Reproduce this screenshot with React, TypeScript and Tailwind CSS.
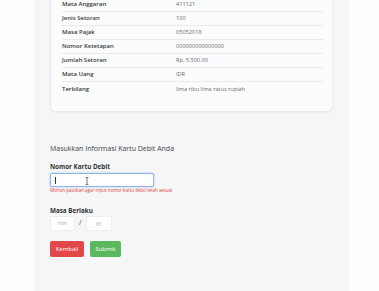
const rows = [
  { label: 'Mata Anggaran', value: '411121' },
  { label: 'Jenis Setoran', value: '100' },
  { label: 'Masa Pajak', value: '05052018' },
  { label: 'Nomor Ketetapan', value: '000000000000000' },
  { label: 'Jumlah Setoran', value: 'Rp. 5,500.00' },
  { label: 'Mata Uang', value: 'IDR' },
  { label: 'Terbilang', value: 'lima ribu lima ratus rupiah' },
];

export default function App() {
  return (
    <div
      className="h-[291px] overflow-hidden bg-[#fdfdfd] text-[#333]"
      style={{ fontFamily: '"Open Sans", "Noto Sans", sans-serif' }}
    >
      <div className="ml-[34px] w-[315px] h-[320px] bg-[#f5f6f7] px-[16px]">
        {/* ringkasan setoran */}
        <div className="-mt-[11px] pt-[8px] pb-[15px] pl-[11px] pr-[9px] rounded-md border border-[#e9ebee] bg-[#fbfcfd] shadow-[0_1px_2px_rgba(0,0,0,0.04)]">
          {rows.map((r, i) => (
            <div
              key={r.label}
              className={`flex items-center h-[14px] ${i < rows.length - 1 ? 'border-b border-[#e8eaec]' : ''}`}
            >
              <div className="w-[114px] text-[6px] font-semibold text-[#3a3a3a]">{r.label}</div>
              <div className="text-[5.6px] text-[#6b6b6b]">{r.value}</div>
            </div>
          ))}
        </div>

        {/* form kartu debit */}
        <div className="pt-[33px]">
          <h2 className="text-[7px] leading-none text-[#444] scale-y-110 origin-left">Masukkan Informasi Kartu Debit Anda</h2>

          <label className="block mt-[12px] text-[6.3px] font-bold text-[#333] leading-none">Nomor Kartu Debit</label>
          <div className="relative mt-[3px] w-[104px] h-[14px] rounded-[2px] border border-[#8fb6e6] bg-white shadow-[0_0_2px_rgba(80,140,220,0.5)]">
            <div className="absolute left-[4px] top-[3px] w-px h-[7px] bg-[#333]" />
            <svg className="absolute left-[34px] top-[3px]" width="4" height="8" viewBox="0 0 4 8">
              <path d="M0.5 0.5h3M2 0.5v7M0.5 7.5h3" stroke="#555" strokeWidth="0.8" fill="none" />
            </svg>
          </div>
          <p className="mt-[1px] text-[4.5px] leading-tight text-[#e0403a]">
            Mohon pastikan agar input nomor kartu debit telah sesuai
          </p>

          <label className="block mt-[14px] text-[6.3px] font-bold text-[#333] leading-none">Masa Berlaku</label>
          <div className="mt-[2px] flex items-center gap-[4px]">
            <div className="w-[25px] h-[15px] rounded-[2px] border border-[#eceef0] bg-white flex items-center justify-center text-[5px] text-[#aaa]">
              mm
            </div>
            <span className="text-[7px] text-[#444]">/</span>
            <div className="w-[26px] h-[15px] rounded-[2px] border border-[#eceef0] bg-white flex items-center justify-center text-[5px] text-[#aaa]">
              yy
            </div>
          </div>

          <div className="mt-[10px] flex gap-[6px]">
            <button className="w-[34px] h-[16px] rounded-[2px] bg-[#e2474a] text-white text-[6px]">Kembali</button>
            <button className="w-[31px] h-[16px] rounded-[2px] bg-[#5cb85c] text-white text-[6px]">Submit</button>
          </div>
        </div>
      </div>
    </div>
  );
}
